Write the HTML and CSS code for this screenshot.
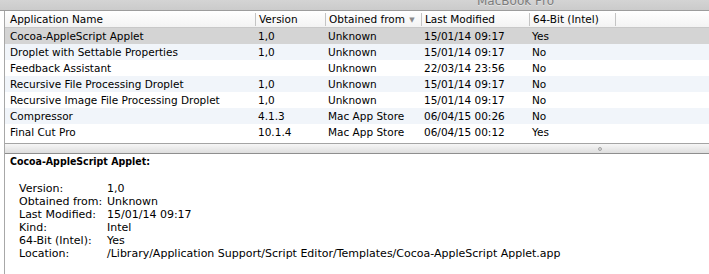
FILE: index.html
```html
<!DOCTYPE html>
<html>
<head>
    <title>System Information - Applications</title>
    <link rel="stylesheet" href="styles.css">
</head>
<body>
    <!-- window title, mostly scrolled off the top -->
    <div class="titlebar"><span class="title">MacBook Pro</span></div>

    <div class="pane">
        <div class="list">
            <div class="row head">
                <div class="cell">Application Name</div>
                <div class="cell">Version</div>
                <div class="cell sorted">Obtained from <span class="arrow">&#9660;</span></div>
                <div class="cell">Last Modified</div>
                <div class="cell">64-Bit (Intel)</div>
                <div class="cell"></div>
            </div>
            <div class="row selected">
                <div class="cell">Cocoa-AppleScript Applet</div>
                <div class="cell">1,0</div>
                <div class="cell">Unknown</div>
                <div class="cell">15/01/14 09:17</div>
                <div class="cell">Yes</div>
                <div class="cell"></div>
            </div>
            <div class="row">
                <div class="cell">Droplet with Settable Properties</div>
                <div class="cell">1,0</div>
                <div class="cell">Unknown</div>
                <div class="cell">15/01/14 09:17</div>
                <div class="cell">No</div>
                <div class="cell"></div>
            </div>
            <div class="row">
                <div class="cell">Feedback Assistant</div>
                <div class="cell"></div>
                <div class="cell">Unknown</div>
                <div class="cell">22/03/14 23:56</div>
                <div class="cell">No</div>
                <div class="cell"></div>
            </div>
            <div class="row">
                <div class="cell">Recursive File Processing Droplet</div>
                <div class="cell">1,0</div>
                <div class="cell">Unknown</div>
                <div class="cell">15/01/14 09:17</div>
                <div class="cell">No</div>
                <div class="cell"></div>
            </div>
            <div class="row">
                <div class="cell">Recursive Image File Processing Droplet</div>
                <div class="cell">1,0</div>
                <div class="cell">Unknown</div>
                <div class="cell">15/01/14 09:17</div>
                <div class="cell">No</div>
                <div class="cell"></div>
            </div>
            <div class="row">
                <div class="cell">Compressor</div>
                <div class="cell">4.1.3</div>
                <div class="cell">Mac App Store</div>
                <div class="cell">06/04/15 00:26</div>
                <div class="cell">No</div>
                <div class="cell"></div>
            </div>
            <div class="row">
                <div class="cell">Final Cut Pro</div>
                <div class="cell">10.1.4</div>
                <div class="cell">Mac App Store</div>
                <div class="cell">06/04/15 00:12</div>
                <div class="cell">Yes</div>
                <div class="cell"></div>
            </div>
        </div>

        <div class="splitter"><span class="grip"></span></div>

        <div class="detail">
            <div class="detail-title">Cocoa-AppleScript Applet:</div>
            <dl class="props">
                <dt>Version:</dt><dd>1,0</dd>
                <dt>Obtained from:</dt><dd>Unknown</dd>
                <dt>Last Modified:</dt><dd>15/01/14 09:17</dd>
                <dt>Kind:</dt><dd>Intel</dd>
                <dt>64-Bit (Intel):</dt><dd>Yes</dd>
                <dt>Location:</dt><dd>/Library/Application Support/Script Editor/Templates/Cocoa-AppleScript Applet.app</dd>
            </dl>
        </div>
    </div>
</body>
</html>
```

FILE: styles.css
```css
body {
    margin: 0;
    font-family: "DejaVu Sans", "Liberation Sans", sans-serif;
    font-size: 10.5px;
    color: #000;
    background: #fff;
    height: 274px;
    overflow: hidden;
}
.titlebar {
    height: 10px;
    overflow: hidden;
    background: linear-gradient(#d4d4d4, #cbcbcb);
    border-bottom: 1px solid #9c9c9c;
    padding-left: 477px;
}
.title {
    display: block;
    margin-top: -6px;
    line-height: 14px;
    font-size: 12px;
    color: #7c7c7c;
    text-shadow: 0 1px 0 #e4e4e4;
}
.pane {
    margin-left: 4px;
    border-left: 1px solid #a8a8a8;
    height: 263px;
}
.list {
    height: 129px;
    background: #fff;
}
.row {
    display: grid;
    grid-template-columns: 250px 70px 96px 108px 86px 1fr;
    height: 16px;
    white-space: nowrap;
}
.row:nth-child(odd) {
    background: #f1f5fa;
}
.row.selected {
    background: #d4d4d4;
}
.cell {
    padding: 1px 0 0 3px;
    line-height: 15px;
    overflow: hidden;
}
.cell:first-child {
    padding-left: 5px;
}
.row.head {
    background: linear-gradient(#ffffff, #f3f3f3);
    border-bottom: 1px solid #c8c8c8;
    height: 16px;
}
.row.head .cell + .cell {
    border-left: 1px solid #c4c4c4;
    margin: 2px 0 1px;
    padding-top: 0;
    line-height: 13px;
}
.arrow {
    font-size: 7px;
    color: #8a8a8a;
    vertical-align: 1px;
    margin-left: 1px;
}
.splitter {
    height: 9px;
    margin-top: 3px;
    border-top: 1px solid #a4a4a4;
    border-bottom: 1px solid #8e8e8e;
    background: linear-gradient(#f6f6f6, #dedede);
    display: flex;
    align-items: center;
    padding-left: 593px;
}
.grip {
    width: 4px;
    height: 4px;
    border-radius: 50%;
    background: #d8d8d8;
    border: 1px solid #a6a6a6;
    box-sizing: border-box;
}
.detail {
    padding: 1px 0 0 5px;
}
.detail-title {
    font-family: "DejaVu Sans Condensed", "DejaVu Sans", sans-serif;
    font-weight: bold;
    font-size: 10.5px;
    line-height: 13px;
    margin-top: 0;
}
.props {
    display: grid;
    grid-template-columns: 88px 1fr;
    grid-auto-rows: 13px;
    margin: 14px 0 0 9px;
    line-height: 13px;
    font-size: 11px;
}
.props dt,
.props dd {
    margin: 0;
    white-space: nowrap;
}
```
